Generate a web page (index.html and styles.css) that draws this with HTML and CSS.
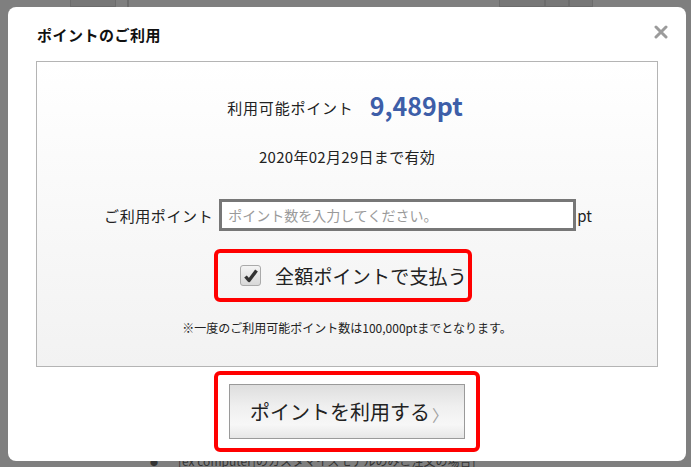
FILE: index.html
```html
<!DOCTYPE html>
<html lang="ja">
<head>
  <meta charset="UTF-8">
  <title>ポイントのご利用</title>
  <link rel="stylesheet" href="styles.css">
</head>
<body>
  <div class="page">
    <div class="page-top">
      <span class="cell cell-a"></span>
      <span class="cell cell-b"></span>
      <span class="cell cell-c"></span>
      <span class="cell cell-d"></span>
      <span class="cell cell-e"></span>
    </div>
    <div class="page-bottom">
      <span class="bullet">●</span>
      <span>[ex computer]のカスタマイズモデルのみご注文の場合]</span>
    </div>
  </div>

  <div class="overlay">
    <div class="modal">
      <div class="modal-header">
        <h2 class="modal-title">ポイントのご利用</h2>
        <button class="close-btn" aria-label="閉じる">
          <svg width="14" height="14" viewBox="0 0 14 14">
            <path d="M2 2 L12 12 M12 2 L2 12" stroke="#9b9b9b" stroke-width="3" stroke-linecap="round"/>
          </svg>
        </button>
      </div>

      <div class="panel">
        <div class="available">
          <span class="available-label">利用可能ポイント</span>
          <span class="available-value">9,489pt</span>
        </div>
        <div class="expire">2020年02月29日まで有効</div>
        <div class="use-row">
          <span class="use-label">ご利用ポイント</span>
          <input class="point-input" type="text" placeholder="ポイント数を入力してください。">
          <span class="use-unit">pt</span>
        </div>
        <div class="highlight full-pay">
          <span class="checkbox">
            <svg width="16" height="16" viewBox="0 0 16 16">
              <path d="M2.5 8.5 L6 12.5 L13.5 2.5" fill="none" stroke="#333" stroke-width="3.4" stroke-linejoin="round"/>
            </svg>
          </span>
          <span class="full-pay-text">全額ポイントで支払う</span>
        </div>
        <p class="note">※一度のご利用可能ポイント数は100,000ptまでとなります。</p>
      </div>

      <div class="actions">
        <div class="highlight submit-frame">
          <button class="submit-btn">ポイントを利用する<span class="chevron">〉</span></button>
        </div>
      </div>
    </div>
  </div>
</body>
</html>
```

FILE: styles.css
```css
    body {
      margin: 0;
      width: 691px;
      height: 467px;
      overflow: hidden;
      background-color: #7f7f7f;
      font-family: "Noto Sans CJK JP", "Noto Sans", sans-serif;
      color: #222;
      position: relative;
    }
    .page {
      height: 467px;
      display: flex;
      flex-direction: column;
      justify-content: space-between;
    }
    .page-top {
      display: flex;
      height: 7px;
      padding-left: 70px;
    }
    .cell {
      height: 6px;
      border: 1px solid #6c6c6c;
      border-top: none;
      background-color: #777;
    }
    .cell-a { width: 44px; }
    .cell-b { width: 0; margin-left: 11px; }
    .cell-c { width: 44px; margin-left: 370px; }
    .cell-d { width: 22px; }
    .cell-e { width: 22px; }
    .page-bottom {
      display: flex;
      gap: 20px;
      padding-left: 150px;
      height: 12px;
      line-height: 12px;
      font-size: 12px;
      color: #333;
      overflow: hidden;
      align-items: flex-end;
    }
    .bullet {
      font-size: 8px;
      line-height: 8px;
    }

    /* modal */
    .overlay {
      position: absolute;
      left: 8px;
      top: 7px;
    }
    .modal {
      width: 678px;
      height: 454px;
      background-color: #fff;
      border-radius: 8px;
      box-sizing: border-box;
      padding: 0 28px;
    }
    .modal-header {
      height: 54px;
      display: flex;
      justify-content: space-between;
      align-items: flex-start;
    }
    .modal-title {
      margin: 18px 0 0 1px;
      font-size: 15px;
      line-height: 20px;
      font-weight: bold;
      color: #111;
      letter-spacing: 0.5px;
    }
    .close-btn {
      margin: 18px -10px 0 0;
      padding: 0;
      border: none;
      background: none;
      width: 14px;
      height: 14px;
      cursor: pointer;
    }
    .panel {
      height: 306px;
      box-sizing: border-box;
      border: 1px solid #b4b4b4;
      background: linear-gradient(to bottom, #ffffff 0%, #f2f2f2 100%);
      display: flex;
      flex-direction: column;
      align-items: center;
      padding-top: 30px;
    }
    .available {
      height: 30px;
      display: flex;
      align-items: center;
      gap: 16px;
      margin-left: -4px;
    }
    .available-label {
      font-size: 15px;
      letter-spacing: 0.8px;
    }
    .available-value {
      font-size: 25px;
      font-weight: bold;
      color: #3d5ea8;
      margin-top: -4px;
    }
    .expire {
      margin-top: 25px;
      font-size: 15px;
      line-height: 20px;
      letter-spacing: 0.3px;
    }
    .use-row {
      margin-top: 32px;
      display: flex;
      align-items: center;
      margin-left: 2px;
    }
    .use-label {
      font-size: 15px;
      letter-spacing: 0.6px;
      margin-right: 6px;
    }
    .point-input {
      width: 357px;
      height: 32px;
      box-sizing: border-box;
      border: 3px solid #777;
      padding: 0 6px;
      font-family: inherit;
      font-size: 14px;
      background-color: #fff;
      outline: none;
    }
    .point-input::placeholder {
      color: #9a9a9a;
    }
    .use-unit {
      font-size: 15px;
      margin-left: 1px;
    }
    .highlight {
      border: 4px solid #f00;
      border-radius: 6px;
      box-sizing: border-box;
    }
    .full-pay {
      margin-top: 18px;
      width: 258px;
      height: 53px;
      display: flex;
      align-items: center;
      padding-left: 22px;
      margin-left: -8px;
    }
    .checkbox {
      width: 21px;
      height: 21px;
      box-sizing: border-box;
      border: 1px solid #aaa;
      border-radius: 3px;
      background: linear-gradient(to bottom, #f4f4f4, #d8d8d8);
      display: flex;
      align-items: center;
      justify-content: center;
      margin-right: 14px;
    }
    .full-pay-text {
      font-size: 19px;
      letter-spacing: 0.2px;
    }
    .note {
      margin: 18px 0 0 0;
      font-size: 12px;
      line-height: 16px;
      color: #222;
    }
    .actions {
      display: flex;
      justify-content: center;
      padding-top: 4px;
    }
    .submit-frame {
      width: 266px;
      height: 81px;
      padding: 9px 11px;
    }
    .submit-btn {
      width: 100%;
      height: 100%;
      border: 1px solid #9a9a9a;
      background: linear-gradient(to bottom, #dedede 0%, #efefef 40%, #f7f7f7 75%, #e6e6e6 100%);
      font-family: inherit;
      font-size: 20px;
      color: #222;
      cursor: pointer;
      padding: 0 0 0 4px;
    }
    .chevron {
      font-size: 16px;
      color: #a0a0a0;
      margin-left: 2px;
      position: relative;
      top: 1px;
    }
```
